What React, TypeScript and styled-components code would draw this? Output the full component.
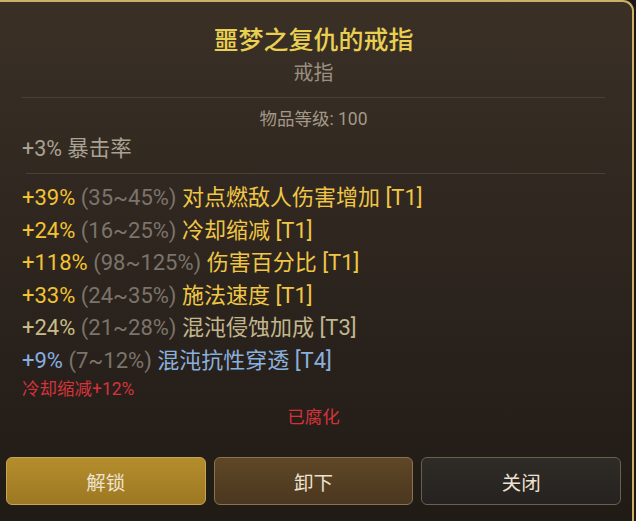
import * as React from "react"
import styled, {createGlobalStyle} from "styled-components"

const GlobalStyle = createGlobalStyle`
  html, body {
    margin: 0;
    padding: 0;
    background: #1c1713;
    overflow: hidden;
  }
  body {
    font-family: Roboto, "Noto Sans CJK SC", sans-serif;
  }
`

type Tone = "gold" | "muted" | "blue"

const affixes: {value: string, range: string, name: string, tier: string, tone: Tone}[] = [
  {value: "+39%", range: "(35~45%)", name: "对点燃敌人伤害增加", tier: "[T1]", tone: "gold"},
  {value: "+24%", range: "(16~25%)", name: "冷却缩减", tier: "[T1]", tone: "gold"},
  {value: "+118%", range: "(98~125%)", name: "伤害百分比", tier: "[T1]", tone: "gold"},
  {value: "+33%", range: "(24~35%)", name: "施法速度", tier: "[T1]", tone: "gold"},
  {value: "+24%", range: "(21~28%)", name: "混沌侵蚀加成", tier: "[T3]", tone: "muted"},
  {value: "+9%", range: "(7~12%)", name: "混沌抗性穿透", tier: "[T4]", tone: "blue"},
]

const toneColors: Record<Tone, {value: string, text: string}> = {
  gold: {value: "#f2c232", text: "#f0c646"},
  muted: {value: "#c9bc86", text: "#c2b68c"},
  blue: {value: "#86aee2", text: "#8ab0de"},
}

const App = () => {
  return (
    <>
      <GlobalStyle/>
      <Panel>
        <Title>噩梦之复仇的戒指</Title>
        <SubTitle>戒指</SubTitle>
        <Divider/>
        <ItemLevel>物品等级: 100</ItemLevel>
        <BaseStat>+3% 暴击率</BaseStat>
        <Divider $inset={4}/>
        <AffixList>
          {affixes.map((a, i) => (
            <Affix key={i}>
              <AffixValue $tone={a.tone}>{a.value}</AffixValue>{" "}
              <AffixRange>{a.range}</AffixRange>{" "}
              <AffixName $tone={a.tone}>{a.name} {a.tier}</AffixName>
            </Affix>
          ))}
        </AffixList>
        <Implicit>冷却缩减+12%</Implicit>
        <Corrupted>已腐化</Corrupted>
        <Actions>
          <ActionButton $variant="primary">解锁</ActionButton>
          <ActionButton $variant="secondary">卸下</ActionButton>
          <ActionButton $variant="plain">关闭</ActionButton>
        </Actions>
      </Panel>
    </>
  )
}

const Panel = styled.div`
  box-sizing: border-box;
  width: 634px;
  min-height: 100vh;
  padding: 21px 27px 0 22px;
  background: linear-gradient(180deg, #3a3026 0%, #2e261f 45%, #211b16 100%);
  border-top: 2px solid #cdb067;
  border-right: 2px solid #cdb067;
  border-top-right-radius: 11px;
  display: flex;
  flex-direction: column;
`
const Title = styled.div`
  text-align: center;
  font-size: 25px;
  font-weight: 500;
  line-height: 30px;
  color: #e9cf52;
  font-family: "Noto Sans CJK SC", sans-serif;
`
const SubTitle = styled.div`
  text-align: center;
  font-size: 20px;
  line-height: 28px;
  margin-top: 5px;
  color: #9a9082;
  font-family: "Noto Sans CJK SC", sans-serif;
`
const Divider = styled.div<{ $inset?: number }>`
  height: 1px;
  margin-top: 11px;
  margin-left: ${p => p.$inset || 0}px;
  background: #4b4034;
`
const ItemLevel = styled.div`
  text-align: center;
  font-size: 17.5px;
  line-height: 24px;
  margin-top: 9px;
  color: #a39887;
`
const BaseStat = styled.div`
  font-size: 21.5px;
  line-height: 28px;
  margin-top: 4px;
  margin-bottom: -1px;
  color: #aaa292;
`
const AffixList = styled.div`
  margin-top: 8px;
  display: flex;
  flex-direction: column;
`
const Affix = styled.div`
  font-size: 22px;
  line-height: 32.5px;
  white-space: nowrap;
`
const AffixValue = styled.span<{ $tone: Tone }>`
  color: ${p => toneColors[p.$tone].value};
`
const AffixRange = styled.span`
  color: #7b746b;
`
const AffixName = styled.span<{ $tone: Tone }>`
  color: ${p => toneColors[p.$tone].text};
`
const Implicit = styled.div`
  font-size: 17.5px;
  line-height: 24px;
  color: #d5333a;
`
const Corrupted = styled.div`
  text-align: center;
  font-size: 17.5px;
  line-height: 24px;
  margin-top: 4px;
  color: #d5333a;
`
const Actions = styled.div`
  display: grid;
  grid-template-columns: repeat(3, 1fr);
  gap: 8px;
  margin: 28px -16px 0 -16px;
`
const variants = {
  primary: {bg: "linear-gradient(180deg, #b48d2c 0%, #9c7822 100%)", border: "#c9a455"},
  secondary: {bg: "linear-gradient(180deg, #5f4726 0%, #4b3720 100%)", border: "#8c7350"},
  plain: {bg: "linear-gradient(180deg, #2f2b27 0%, #26221f 100%)", border: "#6a6052"},
}
const ActionButton = styled.button<{ $variant: keyof typeof variants }>`
  height: 48px;
  border-radius: 6px;
  border: 1.5px solid ${p => variants[p.$variant].border};
  background: ${p => variants[p.$variant].bg};
  color: #ece2cf;
  font-size: 19.5px;
  font-family: "Noto Sans CJK SC", sans-serif;
  cursor: pointer;
`

export default App
